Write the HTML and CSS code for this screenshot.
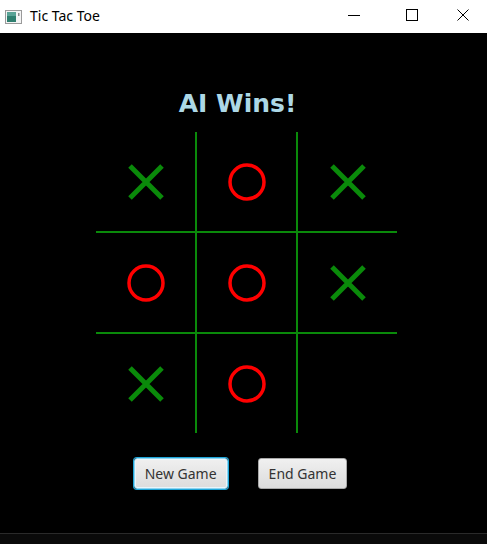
FILE: index.html
```html
<!DOCTYPE html>
<html>
<head>
<meta charset="utf-8">
<title>Tic Tac Toe</title>
<link rel="stylesheet" href="styles.css">
</head>
<body>
<div class="window">
  <div class="titlebar">
    <div class="app">
      <svg class="app-icon" width="17" height="14" viewBox="0 0 17 14">
        <rect x="0.5" y="0.5" width="16" height="13" fill="#f4f4f4" stroke="#9a9a9a"/>
        <rect x="2" y="2" width="9" height="10" fill="#2f7f6f"/>
        <rect x="2" y="2" width="9" height="4" fill="#5aa396"/>
        <rect x="13" y="3" width="1.5" height="3" fill="#8a8a8a"/>
      </svg>
      <span class="app-title">Tic Tac Toe</span>
    </div>
    <div class="controls">
      <div class="ctl"><svg width="12" height="12" viewBox="0 0 12 12"><line x1="0" y1="6.5" x2="12" y2="6.5" stroke="#000" stroke-width="1"/></svg></div>
      <div class="ctl"><svg width="12" height="12" viewBox="0 0 12 12"><rect x="0.5" y="0.5" width="11" height="11" fill="none" stroke="#000" stroke-width="1"/></svg></div>
      <div class="ctl"><svg width="12" height="12" viewBox="0 0 12 12"><path d="M0.5 0.5 L11.5 11.5 M11.5 0.5 L0.5 11.5" stroke="#000" stroke-width="1"/></svg></div>
    </div>
  </div>
  <div class="content">
    <h1 class="status">AI Wins!</h1>
    <div class="board">
      <div class="cell"><svg class="x" width="36" height="36" viewBox="0 0 36 36"><path d="M2 2 L34 34 M34 2 L2 34"/></svg></div>
      <div class="cell"><svg class="o" width="40" height="40" viewBox="0 0 40 40"><circle cx="20" cy="20" r="17"/></svg></div>
      <div class="cell"><svg class="x" width="36" height="36" viewBox="0 0 36 36"><path d="M2 2 L34 34 M34 2 L2 34"/></svg></div>
      <div class="cell"><svg class="o" width="40" height="40" viewBox="0 0 40 40"><circle cx="20" cy="20" r="17"/></svg></div>
      <div class="cell"><svg class="o" width="40" height="40" viewBox="0 0 40 40"><circle cx="20" cy="20" r="17"/></svg></div>
      <div class="cell"><svg class="x" width="36" height="36" viewBox="0 0 36 36"><path d="M2 2 L34 34 M34 2 L2 34"/></svg></div>
      <div class="cell"><svg class="x" width="36" height="36" viewBox="0 0 36 36"><path d="M2 2 L34 34 M34 2 L2 34"/></svg></div>
      <div class="cell"><svg class="o" width="40" height="40" viewBox="0 0 40 40"><circle cx="20" cy="20" r="17"/></svg></div>
      <div class="cell"></div>
    </div>
    <div class="buttons">
      <button class="btn focused">New Game</button>
      <button class="btn">End Game</button>
    </div>
  </div>
  <div class="footer"></div>
</div>
</body>
</html>
```
FILE: styles.css
```css
* { box-sizing: border-box; }
html, body {
  margin: 0;
  padding: 0;
  background: #000;
}
.window {
  width: 487px;
  height: 544px;
  display: flex;
  flex-direction: column;
  background: #000;
  overflow: hidden;
}
.titlebar {
  height: 33px;
  background: #fff;
  display: flex;
  justify-content: space-between;
  align-items: stretch;
  flex: none;
}
.app {
  display: flex;
  align-items: center;
  padding-left: 5px;
  gap: 8px;
}
.app-icon { margin-top: 0px; }
.app-title {
  font-family: "Noto Sans", "Open Sans", sans-serif;
  font-size: 14px;
  color: #000;
  margin-top: -2px;
}
.controls {
  display: flex;
}
.ctl {
  width: 58px;
  display: flex;
  align-items: center;
  justify-content: center;
  padding-bottom: 4px;
}
.ctl:last-child { width: 46px; padding-right: 2px; }
.content {
  flex: 1;
  display: flex;
  flex-direction: column;
  align-items: center;
}
.status {
  margin: 56px 0 0 0;
  height: 43px;
  line-height: 30px;
  font-family: "DejaVu Sans", Verdana, sans-serif;
  font-weight: bold;
  font-size: 25px;
  color: #add8e6;
  margin-left: -12px;
}
.board {
  display: grid;
  grid-template-columns: 99px 99px 99px;
  grid-template-rows: 99px 99px 99px;
  gap: 2px;
  background: #0a8a0a;
  margin-left: 6px;
}
.cell {
  background: #000;
  display: flex;
  align-items: center;
  justify-content: center;
}
.x path {
  stroke: #0a8a0a;
  stroke-width: 5;
  fill: none;
}
.o circle {
  stroke: #ff0000;
  stroke-width: 3.5;
  fill: none;
}
.buttons {
  display: flex;
  gap: 30px;
  margin-top: 25px;
  margin-left: -6px;
}
.btn {
  height: 31px;
  padding: 0 10px;
  font-family: "Noto Sans", "Open Sans", sans-serif;
  font-size: 14px;
  color: #333;
  background: linear-gradient(#f0f0f0, #dcdcdc);
  border: 1px solid #a8a8a8;
  border-radius: 3px;
}
.btn.focused {
  border: 1px solid #8fd3ee;
  box-shadow: 0 0 0 1px #1ea6d9, inset 0 0 0 1px #e8f6fc;
}
.footer {
  flex: none;
  height: 11px;
  border-top: 1px solid #2a2a2a;
  background: #0a0a0a;
}
```
